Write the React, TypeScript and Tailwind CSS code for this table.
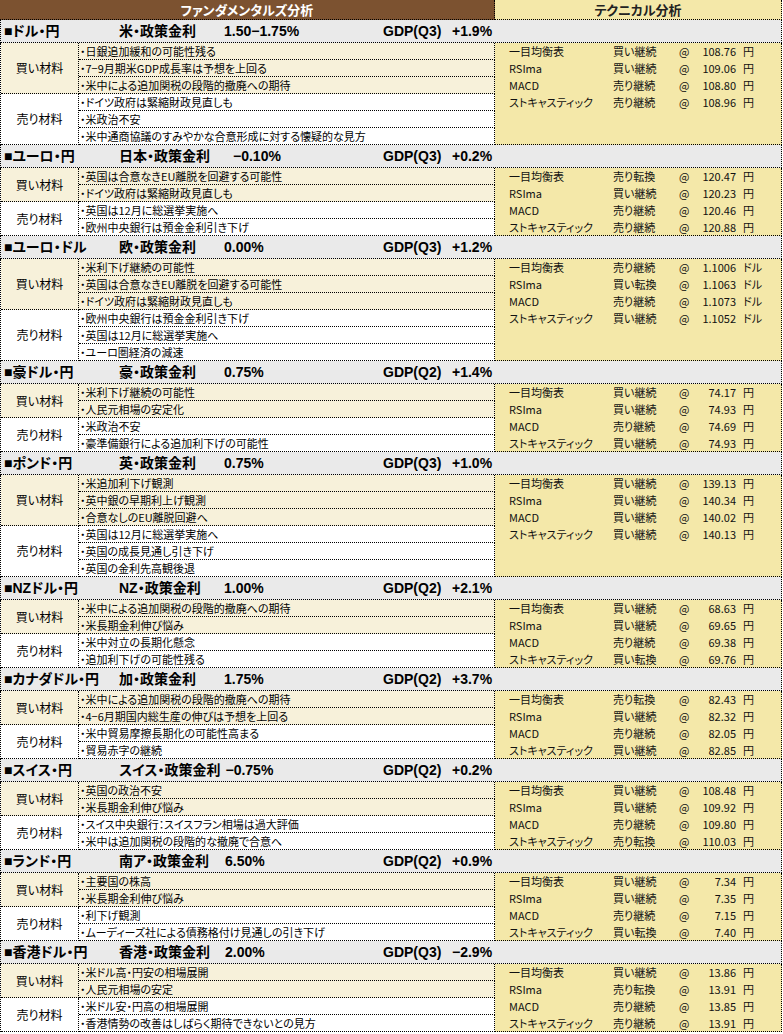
import React from "react";

type Tech = [string, string, string, string];

interface Section {
  pair: string;
  policy: string;
  rate: string;
  policyW: string;
  gdp: string;
  gdpVal: string;
  buy: string[];
  sell: string[];
  tech: Tech[];
}

const sections: Section[] = [
  {
    pair: "■ドル・円",
    policy: "米・政策金利",
    rate: "1.50−1.75%",
    policyW: "w-[105px]",
    gdp: "GDP(Q3)",
    gdpVal: "+1.9%",
    buy: ["日銀追加緩和の可能性残る", "7−9月期米GDP成長率は予想を上回る", "米中による追加関税の段階的撤廃への期待"],
    sell: ["ドイツ政府は緊縮財政見直しも", "米政治不安", "米中通商協議のすみやかな合意形成に対する懐疑的な見方"],
    tech: [
      ["一目均衡表", "買い継続", "108.76", "円"],
      ["RSIma", "買い継続", "109.06", "円"],
      ["MACD", "売り継続", "108.80", "円"],
      ["ストキャスティック", "売り継続", "108.96", "円"],
    ],
  },
  {
    pair: "■ユーロ・円",
    policy: "日本・政策金利",
    rate: "−0.10%",
    policyW: "w-[114px]",
    gdp: "GDP(Q3)",
    gdpVal: "+0.2%",
    buy: ["英国は合意なきEU離脱を回避する可能性", "ドイツ政府は緊縮財政見直しも"],
    sell: ["英国は12月に総選挙実施へ", "欧州中央銀行は預金金利引き下げ"],
    tech: [
      ["一目均衡表", "売り転換", "120.47", "円"],
      ["RSIma", "買い継続", "120.23", "円"],
      ["MACD", "売り継続", "120.46", "円"],
      ["ストキャスティック", "売り継続", "120.88", "円"],
    ],
  },
  {
    pair: "■ユーロ・ドル",
    policy: "欧・政策金利",
    rate: "0.00%",
    policyW: "w-[105px]",
    gdp: "GDP(Q3)",
    gdpVal: "+1.2%",
    buy: ["米利下げ継続の可能性", "英国は合意なきEU離脱を回避する可能性", "ドイツ政府は緊縮財政見直しも"],
    sell: ["欧州中央銀行は預金金利引き下げ", "英国は12月に総選挙実施へ", "ユーロ圏経済の減速"],
    tech: [
      ["一目均衡表", "売り継続", "1.1006", "ドル"],
      ["RSIma", "買い転換", "1.1063", "ドル"],
      ["MACD", "売り継続", "1.1073", "ドル"],
      ["ストキャスティック", "買い継続", "1.1052", "ドル"],
    ],
  },
  {
    pair: "■豪ドル・円",
    policy: "豪・政策金利",
    rate: "0.75%",
    policyW: "w-[105px]",
    gdp: "GDP(Q2)",
    gdpVal: "+1.4%",
    buy: ["米利下げ継続の可能性", "人民元相場の安定化"],
    sell: ["米政治不安", "豪準備銀行による追加利下げの可能性"],
    tech: [
      ["一目均衡表", "買い継続", "74.17", "円"],
      ["RSIma", "買い継続", "74.93", "円"],
      ["MACD", "売り継続", "74.69", "円"],
      ["ストキャスティック", "買い継続", "74.93", "円"],
    ],
  },
  {
    pair: "■ポンド・円",
    policy: "英・政策金利",
    rate: "0.75%",
    policyW: "w-[105px]",
    gdp: "GDP(Q3)",
    gdpVal: "+1.0%",
    buy: ["米追加利下げ観測", "英中銀の早期利上げ観測", "合意なしのEU離脱回避へ"],
    sell: ["英国は12月に総選挙実施へ", "英国の成長見通し引き下げ", "英国の金利先高観後退"],
    tech: [
      ["一目均衡表", "買い継続", "139.13", "円"],
      ["RSIma", "買い継続", "140.34", "円"],
      ["MACD", "買い継続", "140.02", "円"],
      ["ストキャスティック", "買い継続", "140.13", "円"],
    ],
  },
  {
    pair: "■NZドル・円",
    policy: "NZ・政策金利",
    rate: "1.00%",
    policyW: "w-[105px]",
    gdp: "GDP(Q2)",
    gdpVal: "+2.1%",
    buy: ["米中による追加関税の段階的撤廃への期待", "米長期金利伸び悩み"],
    sell: ["米中対立の長期化懸念", "追加利下げの可能性残る"],
    tech: [
      ["一目均衡表", "買い継続", "68.63", "円"],
      ["RSIma", "買い継続", "69.65", "円"],
      ["MACD", "売り継続", "69.38", "円"],
      ["ストキャスティック", "買い転換", "69.76", "円"],
    ],
  },
  {
    pair: "■カナダドル・円",
    policy: "加・政策金利",
    rate: "1.75%",
    policyW: "w-[105px]",
    gdp: "GDP(Q2)",
    gdpVal: "+3.7%",
    buy: ["米中による追加関税の段階的撤廃への期待", "4−6月期国内総生産の伸びは予想を上回る"],
    sell: ["米中貿易摩擦長期化の可能性高まる", "貿易赤字の継続"],
    tech: [
      ["一目均衡表", "売り転換", "82.43", "円"],
      ["RSIma", "買い継続", "82.32", "円"],
      ["MACD", "売り継続", "82.05", "円"],
      ["ストキャスティック", "買い継続", "82.85", "円"],
    ],
  },
  {
    pair: "■スイス・円",
    policy: "スイス・政策金利",
    rate: "−0.75%",
    policyW: "pr-[5px]",
    gdp: "GDP(Q2)",
    gdpVal: "+0.2%",
    buy: ["英国の政治不安", "米長期金利伸び悩み"],
    sell: ["スイス中央銀行：スイスフラン相場は過大評価", "米中は追加関税の段階的な撤廃で合意へ"],
    tech: [
      ["一目均衡表", "買い継続", "108.48", "円"],
      ["RSIma", "買い継続", "109.92", "円"],
      ["MACD", "売り継続", "109.80", "円"],
      ["ストキャスティック", "売り転換", "110.03", "円"],
    ],
  },
  {
    pair: "■ランド・円",
    policy: "南ア・政策金利",
    rate: "6.50%",
    policyW: "w-[106px]",
    gdp: "GDP(Q2)",
    gdpVal: "+0.9%",
    buy: ["主要国の株高", "米長期金利伸び悩み"],
    sell: ["利下げ観測", "ムーディーズ社による債務格付け見通しの引き下げ"],
    tech: [
      ["一目均衡表", "買い継続", "7.34", "円"],
      ["RSIma", "買い継続", "7.35", "円"],
      ["MACD", "売り継続", "7.15", "円"],
      ["ストキャスティック", "買い転換", "7.40", "円"],
    ],
  },
  {
    pair: "■香港ドル・円",
    policy: "香港・政策金利",
    rate: "2.00%",
    policyW: "w-[106px]",
    gdp: "GDP(Q3)",
    gdpVal: "−2.9%",
    buy: ["米ドル高・円安の相場展開", "人民元相場の安定"],
    sell: ["米ドル安・円高の相場展開", "香港情勢の改善はしばらく期待できないとの見方"],
    tech: [
      ["一目均衡表", "買い継続", "13.86", "円"],
      ["RSIma", "売り転換", "13.91", "円"],
      ["MACD", "売り継続", "13.85", "円"],
      ["ストキャスティック", "売り継続", "13.91", "円"],
    ],
  },
];

const labelH: Record<number, string> = {
  2: "h-[34px]",
  3: "h-[51px]",
};

function Label({ text, n, cream }: { text: string; n: number; cream?: boolean }) {
  return (
    <div
      className={`${labelH[n]} ${cream ? "bg-[#f7f1da]" : "bg-white"} border-r border-b border-dotted border-black flex items-center justify-center text-[12px]`}
    >
      {text}
    </div>
  );
}

function Item({ text, cream }: { text: string; cream?: boolean }) {
  return (
    <div
      className={`h-[17px] ${cream ? "bg-[#f7f1da]" : "bg-white"} border-r border-b border-dotted border-black pl-[1px] text-[11px] leading-[16px] whitespace-nowrap`}
    >
      ・{text}
    </div>
  );
}

function Block({ s }: { s: Section }) {
  return (
    <div>
      <div className="h-[23px] bg-[#eaeaea] border-l border-r border-b border-dotted border-black flex items-center pl-[3px] font-bold text-[14px] [font-family:'Liberation_Sans','Noto_Sans_CJK_JP',sans-serif] whitespace-nowrap">
        <span className="w-[115px] shrink-0">{s.pair}</span>
        <span className="w-[264px] shrink-0 flex">
          <span className={`${s.policyW} shrink-0`}>{s.policy}</span>
          <span>{s.rate}</span>
        </span>
        <span className="w-[69px] shrink-0">{s.gdp}</span>
        <span>{s.gdpVal}</span>
      </div>
      <div className="flex border-l border-dotted border-black">
        <div className="w-[78px] flex flex-col">
          <Label text="買い材料" n={s.buy.length} cream />
          <Label text="売り材料" n={s.sell.length} />
        </div>
        <div className="w-[416px] flex flex-col">
          {s.buy.map((b, i) => (
            <Item key={"b" + i} text={b} cream />
          ))}
          {s.sell.map((b, i) => (
            <Item key={"s" + i} text={b} />
          ))}
        </div>
        <div className="w-[287px] bg-[#f4e8a9] border-r border-b border-dotted border-black text-[11px] text-[#111]">
          {s.tech.map((t, i) => (
            <div key={i} className="h-[17px] last:h-[16px] flex items-center pl-[14px] whitespace-nowrap">
              <span className="w-[104px]">{t[0]}</span>
              <span className="w-[66px]">{t[1]}</span>
              <span className="w-[20px]">@</span>
              <span className="w-[37px] text-right">{t[2]}</span>
              <span className="pl-[7px]">{t[3]}</span>
            </div>
          ))}
        </div>
      </div>
    </div>
  );
}

export default function App() {
  return (
    <div className="w-[783px] min-h-screen bg-white text-black [font-family:'Noto_Sans_CJK_JP',sans-serif] [font-feature-settings:'palt']">
      <div className="w-[782px]">
        <div className="flex h-[20px] font-bold text-[13px]">
          <div className="w-[495px] bg-[#7c5230] border-r border-b border-dotted border-black flex items-center justify-center text-white">
            ファンダメンタルズ分析
          </div>
          <div className="w-[287px] bg-[#f4e8a9] border-r border-b border-dotted border-black flex items-center justify-center text-[#222]">
            テクニカル分析
          </div>
        </div>
        {sections.map((s) => (
          <Block key={s.pair} s={s} />
        ))}
      </div>
    </div>
  );
}
